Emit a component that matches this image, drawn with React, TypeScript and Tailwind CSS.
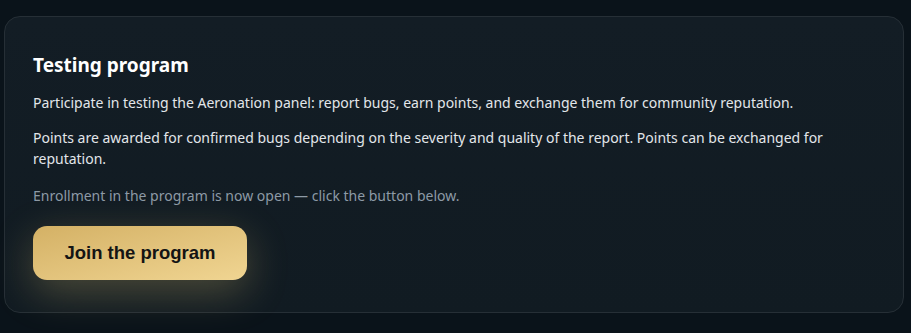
import React from "react";

export default function App() {
  return (
    <div className="w-[911px] h-[333px] bg-[#0a131a] pt-4 pl-1 pr-[7px] overflow-hidden" style={{ fontFamily: '"Noto Sans", "Open Sans", sans-serif' }}>
      <div className="h-[297px] rounded-2xl border border-[#262f36] bg-gradient-to-b from-[#131d25] to-[#111b22] px-7 pt-[34px]">
        <h2 className="text-[19px] leading-[28px] font-bold text-white">Testing program</h2>
        <p className="mt-[13px] text-[14px] leading-[21px] text-[#e2e6ea]">
          Participate in testing the Aeronation panel: report bugs, earn points, and exchange them for community reputation.
        </p>
        <p className="mt-[14px] text-[14px] leading-[21px] text-[#e2e6ea]">
          Points are awarded for confirmed bugs depending on the severity and quality of the report. Points can be exchanged for reputation.
        </p>
        <p className="mt-[16px] text-[14px] leading-[21px] text-[#8d9aa6]">
          Enrollment in the program is now open — click the button below.
        </p>
        <button
          className="mt-[20px] h-[54px] w-[214px] rounded-[14px] bg-gradient-to-br from-[#d4b165] to-[#f0d592] text-[18.5px] font-bold text-[#141414] shadow-[0_12px_40px_rgba(212,185,110,0.3)]"
          style={{ fontFamily: '"Liberation Sans", Arial, sans-serif' }}
        >
          Join the program
        </button>
      </div>
    </div>
  );
}
